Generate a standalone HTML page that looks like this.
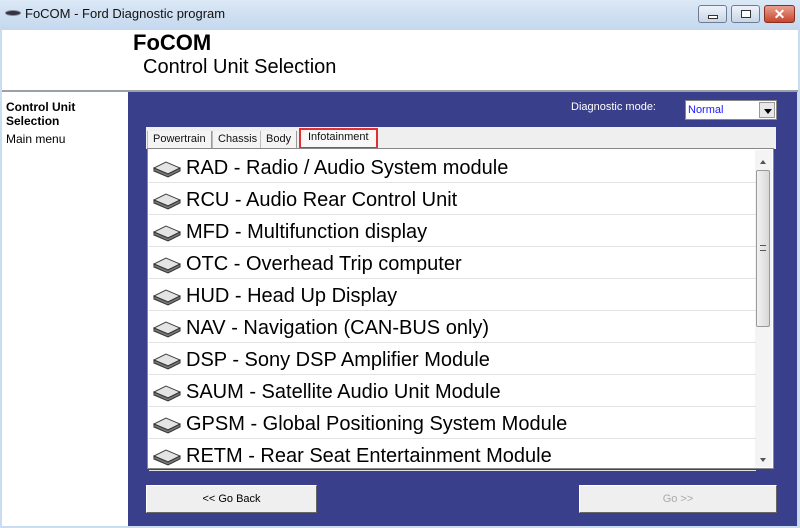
<!DOCTYPE html>
<html><head><style>
*{margin:0;padding:0;box-sizing:border-box}
body{width:800px;height:528px;overflow:hidden;background:#c9dcf0;font-family:"Liberation Sans",sans-serif;position:relative}
.tb{position:absolute;left:0;top:0;width:800px;height:30px;background:linear-gradient(#dbe8f6,#c4d8ee)}
.tb .t{position:absolute;left:25px;top:6px;font-size:13px;color:#111}
.ic{position:absolute;left:5px;top:10px;width:16px;height:6px;border-radius:50%;background:#334;border:1px solid #889}
.btn{position:absolute;top:5px;height:18px;border:1px solid #6d7c92;border-radius:3px;background:linear-gradient(#eef3fa,#c9d6e6)}
.hdr{position:absolute;left:2px;top:30px;width:796px;height:62px;background:#fff;border-bottom:2px solid #9aa0a8}
.h1{position:absolute;left:131px;top:0px;font-size:22px;font-weight:bold;color:#000}
.h2{position:absolute;left:141px;top:26px;font-size:20px;color:#000}
.left{position:absolute;left:2px;top:92px;width:126px;height:434px;background:#fff}
.left b{position:absolute;left:4px;top:2px;font-size:12px;line-height:14px;top:8px}
.left span{position:absolute;left:4px;top:40px;font-size:12px}
.blue{position:absolute;left:128px;top:92px;width:669px;height:434px;background:#3a3f8b}
.dm{position:absolute;left:571px;top:101px;font-size:11px;color:#fff}
.sel{position:absolute;left:685px;top:100px;width:92px;height:20px;background:#fff;border:1px solid #888;font-size:11px;color:#1a1aff;padding:3px 2px}
.sel i{position:absolute;right:1px;top:1px;width:16px;height:16px;background:#e8e8e8;border:1px solid #999}
.sel i:after{content:"";position:absolute;left:4px;top:6px;border:4px solid transparent;border-top:5px solid #000}
.tabs{position:absolute;left:146px;top:127px;width:630px;height:22px;background:#efefef}
.tab{position:absolute;top:4px;height:18px;font-size:11px;color:#111;border-left:1px solid #bbb;border-right:1px solid #999;padding:2px 5px;background:#f4f4f4}
.list{position:absolute;left:147px;top:148px;width:627px;height:321px;background:#fff;border:1px solid #888}
.row{position:absolute;left:1px;width:607px;height:32px;border-bottom:1px solid #e2e2e2;font-size:20px;color:#000;padding:6px 0 0 37px;white-space:nowrap}
.row svg{position:absolute;left:3px;top:8px}
.sb{position:absolute;right:1px;top:1px;width:17px;height:317px;background:#f4f4f4}
.th{position:absolute;left:1px;top:20px;width:14px;height:157px;border:1px solid #999;border-radius:2px;background:linear-gradient(90deg,#f2f2f2,#d8d8d8)}
.b2{position:absolute;height:28px;background:#efefef;border:1px solid #fff;border-right-color:#666;border-bottom-color:#666;font-size:11px;text-align:center;line-height:26px}
</style></head><body>
<div class="tb"><div class="ic"></div><div class="t">FoCOM - Ford Diagnostic program</div>
<div class="btn" style="left:698px;width:29px"><div style="position:absolute;left:9px;top:9px;width:10px;height:4px;border:1px solid #333;background:#fff"></div></div>
<div class="btn" style="left:731px;width:29px"><div style="position:absolute;left:9px;top:4px;width:10px;height:8px;border:1px solid #333;background:#fff"></div></div>
<div class="btn" style="left:764px;width:31px;background:linear-gradient(#e8a090,#c8452e);border-color:#8a3020;color:#fff;font-weight:bold;font-size:14px;text-align:center;line-height:16px">✕</div>
</div>
<div class="hdr"><div class="h1">FoCOM</div><div class="h2">Control Unit Selection</div></div>
<div class="left"><b>Control Unit<br>Selection</b><span>Main menu</span></div>
<div class="blue"></div>
<div class="dm">Diagnostic mode:</div>
<div class="sel">Normal<i></i></div>
<div class="tabs">
<div class="tab" style="left:1px">Powertrain</div>
<div class="tab" style="left:66px">Chassis</div>
<div class="tab" style="left:114px">Body</div>
<div class="tab" style="left:153px;top:1px;height:21px;border:2px solid #e03030;padding:1px 7px;background:#f8f8f8">Infotainment</div>
</div>
<div class="list">
<div class="sb"><div style="position:absolute;left:5px;top:7px;border:3px solid transparent;border-bottom:4px solid #555"></div><div class="th"><div style="position:absolute;left:3px;top:74px;width:6px;height:6px;border-top:1px solid #555;border-bottom:1px solid #555"></div></div><div style="position:absolute;left:5px;top:308px;border:3px solid transparent;border-top:4px solid #555"></div></div>
<div class="row" style="top:2px"><svg width="30" height="20"><path d="M2 9 L14 3 L28 9 L16 15 Z" fill="#e4e4e4" stroke="#444"/><path d="M2 9 L2 12 L16 18 L28 12 L28 9 L16 15Z" fill="#777" stroke="#333"/></svg>RAD - Radio / Audio System module</div>
<div class="row" style="top:34px"><svg width="30" height="20"><path d="M2 9 L14 3 L28 9 L16 15 Z" fill="#e4e4e4" stroke="#444"/><path d="M2 9 L2 12 L16 18 L28 12 L28 9 L16 15Z" fill="#777" stroke="#333"/></svg>RCU - Audio Rear Control Unit</div>
<div class="row" style="top:66px"><svg width="30" height="20"><path d="M2 9 L14 3 L28 9 L16 15 Z" fill="#e4e4e4" stroke="#444"/><path d="M2 9 L2 12 L16 18 L28 12 L28 9 L16 15Z" fill="#777" stroke="#333"/></svg>MFD - Multifunction display</div>
<div class="row" style="top:98px"><svg width="30" height="20"><path d="M2 9 L14 3 L28 9 L16 15 Z" fill="#e4e4e4" stroke="#444"/><path d="M2 9 L2 12 L16 18 L28 12 L28 9 L16 15Z" fill="#777" stroke="#333"/></svg>OTC - Overhead Trip computer</div>
<div class="row" style="top:130px"><svg width="30" height="20"><path d="M2 9 L14 3 L28 9 L16 15 Z" fill="#e4e4e4" stroke="#444"/><path d="M2 9 L2 12 L16 18 L28 12 L28 9 L16 15Z" fill="#777" stroke="#333"/></svg>HUD - Head Up Display</div>
<div class="row" style="top:162px"><svg width="30" height="20"><path d="M2 9 L14 3 L28 9 L16 15 Z" fill="#e4e4e4" stroke="#444"/><path d="M2 9 L2 12 L16 18 L28 12 L28 9 L16 15Z" fill="#777" stroke="#333"/></svg>NAV - Navigation (CAN-BUS only)</div>
<div class="row" style="top:194px"><svg width="30" height="20"><path d="M2 9 L14 3 L28 9 L16 15 Z" fill="#e4e4e4" stroke="#444"/><path d="M2 9 L2 12 L16 18 L28 12 L28 9 L16 15Z" fill="#777" stroke="#333"/></svg>DSP - Sony DSP Amplifier Module</div>
<div class="row" style="top:226px"><svg width="30" height="20"><path d="M2 9 L14 3 L28 9 L16 15 Z" fill="#e4e4e4" stroke="#444"/><path d="M2 9 L2 12 L16 18 L28 12 L28 9 L16 15Z" fill="#777" stroke="#333"/></svg>SAUM - Satellite Audio Unit Module</div>
<div class="row" style="top:258px"><svg width="30" height="20"><path d="M2 9 L14 3 L28 9 L16 15 Z" fill="#e4e4e4" stroke="#444"/><path d="M2 9 L2 12 L16 18 L28 12 L28 9 L16 15Z" fill="#777" stroke="#333"/></svg>GPSM - Global Positioning System Module</div>
<div class="row" style="top:290px"><svg width="30" height="20"><path d="M2 9 L14 3 L28 9 L16 15 Z" fill="#e4e4e4" stroke="#444"/><path d="M2 9 L2 12 L16 18 L28 12 L28 9 L16 15Z" fill="#777" stroke="#333"/></svg>RETM - Rear Seat Entertainment Module</div>
</div>
<div class="b2" style="left:146px;top:485px;width:171px">&lt;&lt; Go Back</div>
<div class="b2" style="left:579px;top:485px;width:198px;color:#aaa">Go &gt;&gt;</div>
</body></html>
